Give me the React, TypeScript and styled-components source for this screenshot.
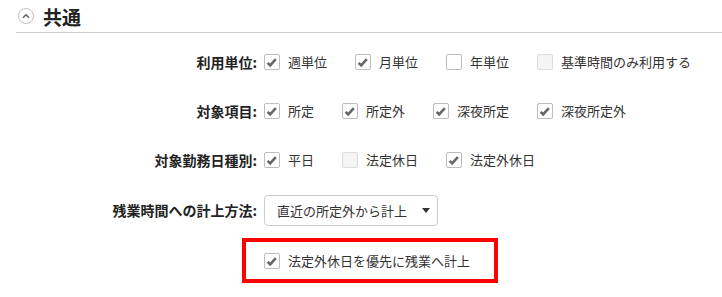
import styled, { createGlobalStyle } from "styled-components";

const GlobalStyle = createGlobalStyle`
  body {
    margin: 0;
    background: #fff;
    color: #333;
    font-family: "Noto Sans CJK JP", "Noto Sans", sans-serif;
    font-size: 13px;
  }
`;

const Page = styled.div`
  width: 722px;
  padding-left: 16px;
  box-sizing: border-box;
`;

const Header = styled.div`
  display: flex;
  align-items: center;
  height: 32px;
  border-bottom: 1px solid #ccc;
  gap: 9px;
  padding-left: 2px;
`;

const Toggle = styled.span`
  width: 16px;
  height: 16px;
  border: 1px solid #c4c4c4;
  border-radius: 50%;
  box-sizing: border-box;
  display: flex;
  align-items: center;
  justify-content: center;
`;

const Title = styled.h2`
  margin: 0;
  font-size: 19px;
  font-weight: 700;
  color: #222;
  line-height: 1;
`;

const Form = styled.div`
  padding-top: 4px;
`;

const Row = styled.div<{ $h: number }>`
  display: grid;
  grid-template-columns: 241px 1fr;
  column-gap: 7px;
  align-items: center;
  height: ${(p) => p.$h}px;
`;

const Label = styled.div`
  text-align: right;
  font-size: 14px;
  font-weight: 700;
  color: #222;
`;

const Options = styled.div`
  display: flex;
  align-items: center;
  gap: 28px;
`;

const Option = styled.label`
  display: flex;
  align-items: center;
  gap: 8px;
  white-space: nowrap;
`;

const Box = styled.span<{ $disabled?: boolean }>`
  width: 16px;
  height: 16px;
  box-sizing: border-box;
  border: 1px solid ${(p) => (p.$disabled ? "#ddd" : "#bdbdbd")};
  border-radius: 2px;
  background: ${(p) => (p.$disabled ? "#f4f4f4" : "#fff")};
  position: relative;
  flex: none;
`;

const Mark = styled.svg`
  position: absolute;
  left: -1px;
  top: -1px;
`;

const Select = styled.div`
  width: 174px;
  height: 31px;
  box-sizing: border-box;
  border: 1px solid #ccc;
  border-radius: 4px;
  display: flex;
  align-items: center;
  justify-content: space-between;
  padding: 0 7px 0 12px;
  color: #333;
`;

const Caret = styled.span`
  width: 0;
  height: 0;
  border-left: 4px solid transparent;
  border-right: 4px solid transparent;
  border-top: 5px solid #333;
`;

const Highlight = styled.div`
  margin: 2px 0 0 -22px;
  width: 256px;
  height: 45px;
  box-sizing: border-box;
  border: 4px solid #f00;
  display: flex;
  align-items: center;
  padding-left: 18px;
`;

function Check({ checked, disabled }: { checked?: boolean; disabled?: boolean }) {
  return (
    <Box $disabled={disabled}>
      {checked && (
        <Mark width="16" height="16" viewBox="0 0 16 16">
          <path
            d="M3.6 8.8 L6.2 11.4 L11.8 5.2"
            fill="none"
            stroke="#666"
            strokeWidth="2.6"
          />
        </Mark>
      )}
    </Box>
  );
}

interface Item {
  text: string;
  checked?: boolean;
  disabled?: boolean;
}

const rows: { label: string; items: Item[] }[] = [
  {
    label: "利用単位:",
    items: [
      { text: "週単位", checked: true },
      { text: "月単位", checked: true },
      { text: "年単位" },
      { text: "基準時間のみ利用する", disabled: true },
    ],
  },
  {
    label: "対象項目:",
    items: [
      { text: "所定", checked: true },
      { text: "所定外", checked: true },
      { text: "深夜所定", checked: true },
      { text: "深夜所定外", checked: true },
    ],
  },
  {
    label: "対象勤務日種別:",
    items: [
      { text: "平日", checked: true },
      { text: "法定休日", disabled: true },
      { text: "法定外休日", checked: true },
    ],
  },
];

export default function App() {
  return (
    <Page>
      <GlobalStyle />
      <Header>
        <Toggle>
          <svg width="8" height="6" viewBox="0 0 8 6">
            <path d="M1 4.8 L4 1.8 L7 4.8" fill="none" stroke="#666" strokeWidth="1.6" />
          </svg>
        </Toggle>
        <Title>共通</Title>
      </Header>
      <Form>
        {rows.map((r) => (
          <Row $h={49} key={r.label}>
            <Label>{r.label}</Label>
            <Options>
              {r.items.map((it) => (
                <Option key={it.text}>
                  <Check checked={it.checked} disabled={it.disabled} />
                  {it.text}
                </Option>
              ))}
            </Options>
          </Row>
        ))}
        <Row $h={52}>
          <Label>残業時間への計上方法:</Label>
          <Select>
            直近の所定外から計上
            <Caret />
          </Select>
        </Row>
        <Row $h={47}>
          <span />
          <Highlight>
            <Option>
              <Check checked />
              法定外休日を優先に残業へ計上
            </Option>
          </Highlight>
        </Row>
      </Form>
    </Page>
  );
}
